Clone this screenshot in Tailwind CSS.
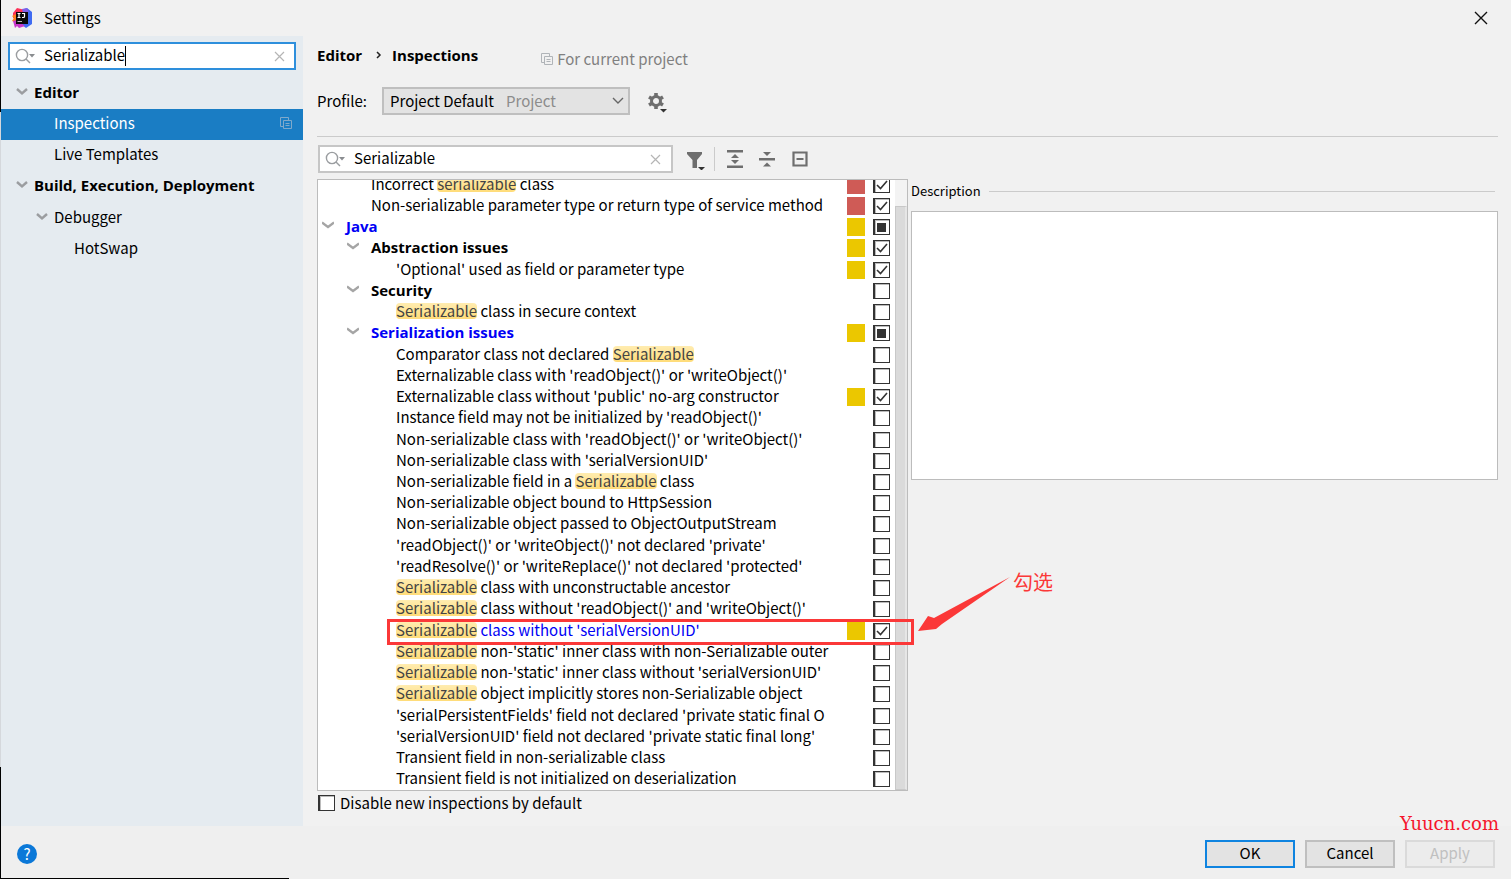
<!DOCTYPE html>
<html lang="en">
<head>
    <meta charset="UTF-8">
    <meta name="viewport" content="width=device-width, initial-scale=1.0">
    <title>Settings</title>
    <script src="https://cdn.jsdelivr.net/npm/@tailwindcss/browser@4"></script>
</head>
<body class="flex h-screen overflow-hidden bg-[#f1f1f1] font-['Noto_Sans_CJK_SC',sans-serif] text-[15px] leading-5 text-black">
    <!-- Desktop edge behind the window -->
    <div class="flex w-px shrink-0 flex-col bg-[#d5d8dc]">
        <div class="h-28 bg-black"></div>
        <div class="mt-auto h-28 bg-black"></div>
    </div>

    <div class="flex min-w-0 flex-1 flex-col">
        <!-- Title bar -->
        <header class="flex h-9 shrink-0 items-center pl-[11px] pr-[23px]">
            <svg class="h-5 w-5" viewBox="0 0 20 20">
                <path d="M1 5 5 0l8 2-2 6-8 3-2-1Z" fill="#fc3158"/>
                <path d="m0 8 4-2 1 9-5-2 2-3Z" fill="#fc801d"/>
                <path d="m12 1 3-1 5 4v12l-6 4-4-3Z" fill="#3f6bf2"/>
                <path d="m10 1 5-1 2 4-6 1Z" fill="#8060e8"/>
                <path d="m1 13 4-1 8 6-6 2-2-2-2 2Z" fill="#c737c9"/>
                <path d="M4 4h12v12H4z" fill="#0a0a0a"/>
                <path d="M5.500 5.500h3M7 5.500v4M5.500 9.500h3M10 5.500h2.500v3q0 1-1.200 1H10" fill="none" stroke="#fff" stroke-width="1.200"/>
                <path d="M5.500 13.500h4.500" stroke="#bbb"/>
            </svg>
            <h1 class="ml-3">Settings</h1>
            <button class="ml-auto" aria-label="Close">
                <svg class="h-[14px] w-[14px]" viewBox="0 0 14 14" fill="none" stroke="#111" stroke-width="1.400"><path d="m1 1 12 12M13 1 1 13"/></svg>
            </button>
        </header>

        <div class="flex min-h-0 flex-1">
            <!-- Sidebar -->
            <aside class="w-[302px] shrink-0 bg-[#e5ebf0]">
                <div class="mx-[7px] mt-[6px] mb-[7px] flex h-7 items-center border-2 border-[#2e8fdc] bg-white pl-[5px] pr-[9px]">
                    <svg class="h-5 w-5 shrink-0" viewBox="0 0 20 20" fill="none" stroke="#9a9da0" stroke-width="1.400"><circle cx="7" cy="9" r="5.600"/><path d="m11 13 4 4"/><path d="M14 8h6l-3 3.500Z" fill="#8a8d90" stroke="none"/></svg>
                    <div class="relative ml-[9px] min-w-0 flex-1">
                        <input class="block h-5 w-full pb-[2px] caret-transparent outline-none" type="text" aria-label="Search settings" value="Serializable">
                        <span class="pointer-events-none absolute left-[81px] top-0 h-5 w-px bg-black"></span>
                    </div>
                    <button aria-label="Clear search"><svg class="h-[11px] w-[11px]" viewBox="0 0 11 11" fill="none" stroke="#b5b5b5" stroke-width="1.200"><path d="m1 1 9 9M10 1 1 10"/></svg></button>
                </div>
                <nav class="flex flex-col">
                    <a href="#" class="flex h-8 items-center pb-[3px] pl-[15px] font-['Open_Sans'] font-bold">
                        <svg class="mr-[6px] h-3 w-3" viewBox="0 0 12 12" fill="none" stroke="#9b9da0" stroke-width="2.400"><path d="m1 3 5 4.500L11 3"/></svg>Editor
                    </a>
                    <a href="#" class="flex h-[31px] items-center bg-[#1a7dc4] pb-[3px] pl-[53px] pr-[11px] text-white">
                        Inspections
                        <svg class="ml-auto h-3 w-3" viewBox="0 0 12 12" fill="none" stroke="#7fa9cb"><path d="M3 9.500H.5v-9h8V3"/><path d="M3.500 3.500h8v8h-8zM5.500 6.500h4M5.500 8.500h4"/></svg>
                    </a>
                    <a href="#" class="flex h-[31px] items-center pb-[3px] pl-[53px]">Live Templates</a>
                    <a href="#" class="flex h-[31px] items-center pb-[3px] pl-[15px] font-['Open_Sans'] font-bold">
                        <svg class="mr-[6px] h-3 w-3" viewBox="0 0 12 12" fill="none" stroke="#9b9da0" stroke-width="2.400"><path d="m1 3 5 4.500L11 3"/></svg>Build, Execution, Deployment
                    </a>
                    <a href="#" class="flex h-8 items-center pb-[3px] pl-[35px]">
                        <svg class="mr-[6px] h-3 w-3" viewBox="0 0 12 12" fill="none" stroke="#9b9da0" stroke-width="2.400"><path d="m1 3 5 4.500L11 3"/></svg>Debugger
                    </a>
                    <a href="#" class="flex h-[31px] items-center pb-[3px] pl-[73px]">HotSwap</a>
                </nav>
            </aside>

            <!-- Content -->
            <main class="flex min-w-0 flex-1 flex-col pl-[14px] pr-[13px]">
                <div class="flex h-12 items-start pt-[9px]">
                    <h2 class="flex font-['Open_Sans'] font-bold">Editor
                        <svg class="ml-[14px] mr-[10px] mt-[6px] h-2 w-[6px]" viewBox="0 0 6 8" fill="none" stroke="#222" stroke-width="1.500"><path d="m1 1 3 3-3 3"/></svg>
                        Inspections</h2>
                    <p class="ml-[63px] mt-1 flex items-center text-[#808080]">
                        <svg class="mr-1 h-3 w-3" viewBox="0 0 12 12" fill="none" stroke="#b0b4b8"><path d="M3 9.500H.5v-9h8V3"/><path d="M3.500 3.500h8v8h-8zM5.500 6.500h4M5.500 8.500h4"/></svg>
                        For current project
                    </p>
                </div>
                <div class="flex h-[53px] items-start border-b border-[#cbcbcb] pt-[3px]">
                    <label for="profile" class="mt-1 w-[65px]">Profile:</label>
                    <div class="relative w-[248px]">
                        <select id="profile" class="block h-7 w-full appearance-none border-2 border-[#bfbfbf] bg-[#e3e3e3] pl-[6px]">
                            <option>Project Default</option>
                        </select>
                        <span class="pointer-events-none absolute left-[124px] top-1 text-[#8c8c8c]">Project</span>
                        <svg class="pointer-events-none absolute right-[6px] top-2 h-3 w-3" viewBox="0 0 12 12" fill="none" stroke="#666" stroke-width="1.400"><path d="m1 3 5 5 5-5"/></svg>
                    </div>
                    <button class="ml-[18px] mt-[6px]" aria-label="Profile actions">
                        <svg class="h-5 w-5" viewBox="0 0 20 20"><circle cx="8" cy="8" r="4.500" fill="none" stroke="#6e6e6e" stroke-width="3"/><path d="M8 0v3M8 13v3M1 4l2.600 1.500M12.400 10.500 15 12M1 12l2.600-1.500M12.400 5.500 15 4" stroke="#6e6e6e" stroke-width="3.600"/><path d="M12 16h7l-3.500 3.500Z" fill="#333"/></svg>
                    </button>
                </div>

                <div class="mt-2 flex h-7 items-center">
                    <div class="ml-px flex h-7 w-[355px] items-center border-2 border-[#c6c6c6] bg-white pl-[5px] pr-[10px]">
                        <svg class="h-5 w-5 shrink-0" viewBox="0 0 20 20" fill="none" stroke="#9a9da0" stroke-width="1.400"><circle cx="7" cy="9" r="5.600"/><path d="m11 13 4 4"/><path d="M14 8h6l-3 3.500Z" fill="#8a8d90" stroke="none"/></svg>
                        <input class="ml-[9px] h-5 min-w-0 flex-1 pb-[2px] outline-none" type="text" aria-label="Search inspections" value="Serializable">
                        <button aria-label="Clear filter"><svg class="h-[11px] w-[11px]" viewBox="0 0 11 11" fill="none" stroke="#b5b5b5" stroke-width="1.200"><path d="m1 1 9 9M10 1 1 10"/></svg></button>
                    </div>
                    <button class="ml-[14px] pt-1" aria-label="Filter inspections">
                        <svg class="h-[18px] w-[18px]" viewBox="0 0 18 18"><path d="M0 0h15v2l-5 6v8H5.500V8L0 2Z" fill="#6e6e6e"/><path d="M11 15h7l-3.500 3.500Z" fill="#333"/></svg>
                    </button>
                    <div class="mx-[9px] h-6 w-px bg-[#cbcbcb]"></div>
                    <button class="ml-[3px]" aria-label="Expand all">
                        <svg class="h-[18px] w-4" viewBox="0 0 16 18" fill="#6e6e6e"><path d="M0 0h16v2.500H0zM0 15.500h16V18H0zM8 4l4 4H4zM8 14l4-4H4z"/></svg>
                    </button>
                    <button class="ml-4" aria-label="Collapse all">
                        <svg class="h-4 w-4" viewBox="0 0 16 16" fill="#6e6e6e"><path d="M0 7h16v2.500H0zM8 5l4-4H4zM8 11.500l4 4H4z"/></svg>
                    </button>
                    <button class="ml-[17px]" aria-label="Reset to empty">
                        <svg class="h-4 w-4" viewBox="0 0 16 16" fill="none" stroke="#6e6e6e" stroke-width="2.200"><path d="M1.500 1.500h13v13h-13zM4.500 8h7"/></svg>
                    </button>
                </div>

                <div class="mt-[6px] flex items-start">
                    <!-- Inspections tree -->
                    <div class="relative w-[591px] shrink-0">
                        <div class="flex h-[612px] overflow-hidden border border-[#bcbcbc] bg-white">
                            <ul id="inspections" class="-mt-[6px] grid h-[616px] min-w-0 flex-1 auto-rows-fr"></ul>
                            <div class="ml-auto w-3 shrink-0 bg-[#f3f3f3] pt-[26px]">
                                <div class="h-full border border-r-2 border-[#c8c8c8] border-r-[#e6e6e6] bg-[#dadada]"></div>
                            </div>
                        </div>
                        <!-- Marker around the selected inspection -->
                        <div class="pointer-events-none absolute bottom-[146px] left-[70px] h-[26px] w-[527px] border-3 border-[#fb3838]"></div>
                        <svg class="pointer-events-none absolute bottom-[158px] left-[601px] h-14 w-[92px]" viewBox="0 0 92 56" fill="#fb3838"><path d="M0 54 10 39l6 2L92 0 24 47l-6 5Z"/></svg>
                        <span class="absolute bottom-[199px] left-[696px] whitespace-nowrap text-xl leading-5 text-[#fb3838]">勾选</span>
                    </div>

                    <!-- Description -->
                    <section class="ml-[3px] min-w-0 flex-1">
                        <div class="flex h-8 items-center pb-2 text-[13px]">
                            <h3>Description</h3>
                            <div class="ml-2 mr-[3px] h-px flex-1 bg-[#cbcbcb]"></div>
                        </div>
                        <div class="h-[269px] border border-[#bcbcbc] bg-white"></div>
                    </section>
                </div>

                <label class="mt-[2px] flex items-center gap-[5px]">
                    <input type="checkbox" class="ml-px h-4 w-[17px] appearance-none border border-l-2 border-[#333] bg-white shadow-[inset_1px_1px_0_#bbb]">
                    Disable new inspections by default
                </label>
            </main>
        </div>

        <!-- Footer -->
        <footer class="relative flex h-[53px] shrink-0 items-center bg-[#efefef] px-4 pt-[3px]">
            <button class="h-5 w-5 rounded-full bg-[#0b78d8] text-white" aria-label="Help">?</button>
            <span class="absolute -top-3 right-[12px] font-['DejaVu_Serif',serif] text-lg leading-5 text-[#f5152c]">Yuucn.com</span>
            <div class="absolute bottom-0 left-0 h-px w-72 bg-black"></div>
            <div class="ml-auto flex gap-[10px]">
                <button class="h-7 w-[90px] border-2 border-[#0f84e0] bg-[#e3e3e3] pb-[2px]">OK</button>
                <button class="h-7 w-[90px] border-2 border-[#bfbfbf] bg-[#e3e3e3] pb-[2px]">Cancel</button>
                <button class="h-7 w-[90px] border-2 border-[#dadada] bg-[#ececec] pb-[2px] text-[#c0c0c0]" disabled>Apply</button>
            </div>
        </footer>
    </div>

    <script>
        const indents = ['pl-[4px]', 'pl-[29px]', 'pl-[53px]', 'pl-[78px]'];
        const severities = { error: 'bg-[#cf5b56]', warning: 'bg-[#ebc700]' };

        // Names in [brackets] are search hits
        const inspections = [
            { level: 2, name: 'Incorrect [serializable] class', severity: 'error', state: 'on' },
            { level: 2, name: 'Non-serializable parameter type or return type of service method', severity: 'error', state: 'on' },
            { level: 0, name: 'Java', group: true, changed: true, severity: 'warning', state: 'mixed' },
            { level: 1, name: 'Abstraction issues', group: true, severity: 'warning', state: 'on' },
            { level: 3, name: "'Optional' used as field or parameter type", severity: 'warning', state: 'on' },
            { level: 1, name: 'Security', group: true },
            { level: 3, name: '[Serializable] class in secure context' },
            { level: 1, name: 'Serialization issues', group: true, changed: true, severity: 'warning', state: 'mixed' },
            { level: 3, name: 'Comparator class not declared [Serializable]' },
            { level: 3, name: "Externalizable class with 'readObject()' or 'writeObject()'" },
            { level: 3, name: "Externalizable class without 'public' no-arg constructor", severity: 'warning', state: 'on' },
            { level: 3, name: "Instance field may not be initialized by 'readObject()'" },
            { level: 3, name: "Non-serializable class with 'readObject()' or 'writeObject()'" },
            { level: 3, name: "Non-serializable class with 'serialVersionUID'" },
            { level: 3, name: 'Non-serializable field in a [Serializable] class' },
            { level: 3, name: 'Non-serializable object bound to HttpSession' },
            { level: 3, name: 'Non-serializable object passed to ObjectOutputStream' },
            { level: 3, name: "'readObject()' or 'writeObject()' not declared 'private'" },
            { level: 3, name: "'readResolve()' or 'writeReplace()' not declared 'protected'" },
            { level: 3, name: '[Serializable] class with unconstructable ancestor' },
            { level: 3, name: "[Serializable] class without 'readObject()' and 'writeObject()'" },
            { level: 3, name: "[Serializable] class without 'serialVersionUID'", changed: true, severity: 'warning', state: 'on' },
            { level: 3, name: "[Serializable] non-'static' inner class with non-Serializable outer" },
            { level: 3, name: "[Serializable] non-'static' inner class without 'serialVersionUID'" },
            { level: 3, name: '[Serializable] object implicitly stores non-Serializable object' },
            { level: 3, name: "'serialPersistentFields' field not declared 'private static final O" },
            { level: 3, name: "'serialVersionUID' field not declared 'private static final long'" },
            { level: 3, name: 'Transient field in non-serializable class' },
            { level: 3, name: 'Transient field is not initialized on deserialization' },
        ];

        const arrow = '<svg class="mr-3 h-3 w-3 shrink-0" viewBox="0 0 12 12" fill="none" stroke="#a5a5a5" stroke-width="2.200"><path d="m0 2.500 6 4.500 6-4.500"/></svg>';
        const hit = '<mark class="inline-block h-4 rounded-sm bg-linear-to-b from-[#ffecb0] to-[#ffdc78] leading-4 text-[#444]">$1</mark>';

        document.getElementById('inspections').innerHTML = inspections.map((item, i) => `
            <li class="flex min-h-0 items-center">
                <label for="inspection${i}" class="flex w-[525px] items-center overflow-hidden whitespace-nowrap pb-[2px] ${indents[item.level]} ${item.group ? "font-['Open_Sans'] font-bold" : ''} ${item.changed ? 'text-[#0000f5]' : ''}">
                    ${item.group ? arrow : ''}<span>${item.name.replace(/\[(\w+)\]/, hit)}</span>
                </label>
                <span class="ml-1 h-[18px] w-[18px] shrink-0 ${item.severity ? severities[item.severity] : ''}"></span>
                <span class="relative ml-2 h-4 w-[17px] shrink-0">
                    <input id="inspection${i}" type="checkbox" ${item.state === 'on' ? 'checked' : ''} class="peer block h-full w-full appearance-none border border-l-2 border-[#333] bg-white shadow-[inset_1px_1px_0_#bbb]">
                    <svg class="pointer-events-none absolute inset-0 hidden h-4 w-[17px] peer-checked:block" viewBox="0 0 17 16" fill="none" stroke="#333" stroke-width="1.600"><path d="m4 8 3.500 3.500L14 4"/></svg>
                    ${item.state === 'mixed' ? '<span class="pointer-events-none absolute left-1 top-1 h-[9px] w-[9px] bg-[#333]"></span>' : ''}
                </span>
            </li>
        `).join('');

        document.querySelectorAll('#inspections input').forEach((box, i) => {
            box.indeterminate = inspections[i].state === 'mixed';
        });
    </script>
</body>
</html>
